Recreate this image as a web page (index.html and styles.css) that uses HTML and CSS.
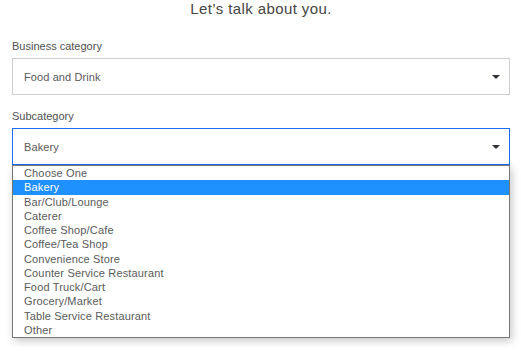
FILE: index.html
```html
<!DOCTYPE html>
<html lang="en">
<head>
<meta charset="utf-8">
<title>Let's talk about you</title>
<link rel="stylesheet" href="styles.css">
</head>
<body>
<div class="page">
  <h1 class="title">Let’s talk about you.</h1>
  <div class="field">
    <div class="label">Business category</div>
    <div class="select">
      <span class="value">Food and Drink</span>
      <span class="caret"></span>
    </div>
  </div>
  <div class="field field-sub">
    <div class="label">Subcategory</div>
    <div class="select-wrap">
      <div class="select select-focused">
        <span class="value">Bakery</span>
        <span class="caret"></span>
      </div>
      <div class="choice-list">
        <div class="choice">Choose One</div>
        <div class="choice choice-selected">Bakery</div>
        <div class="choice">Bar/Club/Lounge</div>
        <div class="choice">Caterer</div>
        <div class="choice">Coffee Shop/Cafe</div>
        <div class="choice">Coffee/Tea Shop</div>
        <div class="choice">Convenience Store</div>
        <div class="choice">Counter Service Restaurant</div>
        <div class="choice">Food Truck/Cart</div>
        <div class="choice">Grocery/Market</div>
        <div class="choice">Table Service Restaurant</div>
        <div class="choice">Other</div>
      </div>
    </div>
  </div>
</div>
</body>
</html>
```

FILE: styles.css
```css
html, body {
  margin: 0;
  padding: 0;
  background: #ffffff;
}

html {
  height: 100%;
}

body {
  min-height: 100%;
  font-family: "Liberation Sans", Arial, sans-serif;
  color: #444;
}

.page {
  min-height: 351px;
  padding: 0 11px 0 12px;
}

.title {
  margin: 0;
  font-size: 15px;
  line-height: 18px;
  font-weight: normal;
  text-align: center;
  color: #454545;
  letter-spacing: 0.4px;
}

.field {
  margin-top: 22px;
}

.field-sub {
  margin-top: 15px;
}

.label {
  font-size: 11px;
  line-height: 13px;
  color: #505050;
  margin-bottom: 5px;
}

.select-wrap {
  position: relative;
}

.select {
  box-sizing: border-box;
  height: 37px;
  border: 1px solid #cfcfcf;
  display: flex;
  align-items: center;
  justify-content: space-between;
  padding: 0 9px 0 11px;
  background: #fff;
}

.select-focused {
  border-color: #1a6cf0;
}

.value {
  font-size: 11px;
  color: #5a5a5a;
  letter-spacing: 0.1px;
}

.caret {
  width: 0;
  height: 0;
  border-left: 4px solid transparent;
  border-right: 4px solid transparent;
  border-top: 4px solid #2e3136;
  margin-top: 1px;
}

.choice-list {
  position: absolute;
  z-index: 5;
  top: 37px;
  left: 0;
  width: 100%;
  box-sizing: border-box;
  background: #fff;
  border: 1px solid #767676;
  box-shadow: 2px 3px 8px rgba(0, 0, 0, 0.22);
}

.choice {
  font-size: 11px;
  line-height: 14.25px;
  padding-left: 11px;
  color: #5a5a5a;
  letter-spacing: 0.15px;
}

.choice-selected {
  background: #1e90ff;
  color: #fff;
}
```
